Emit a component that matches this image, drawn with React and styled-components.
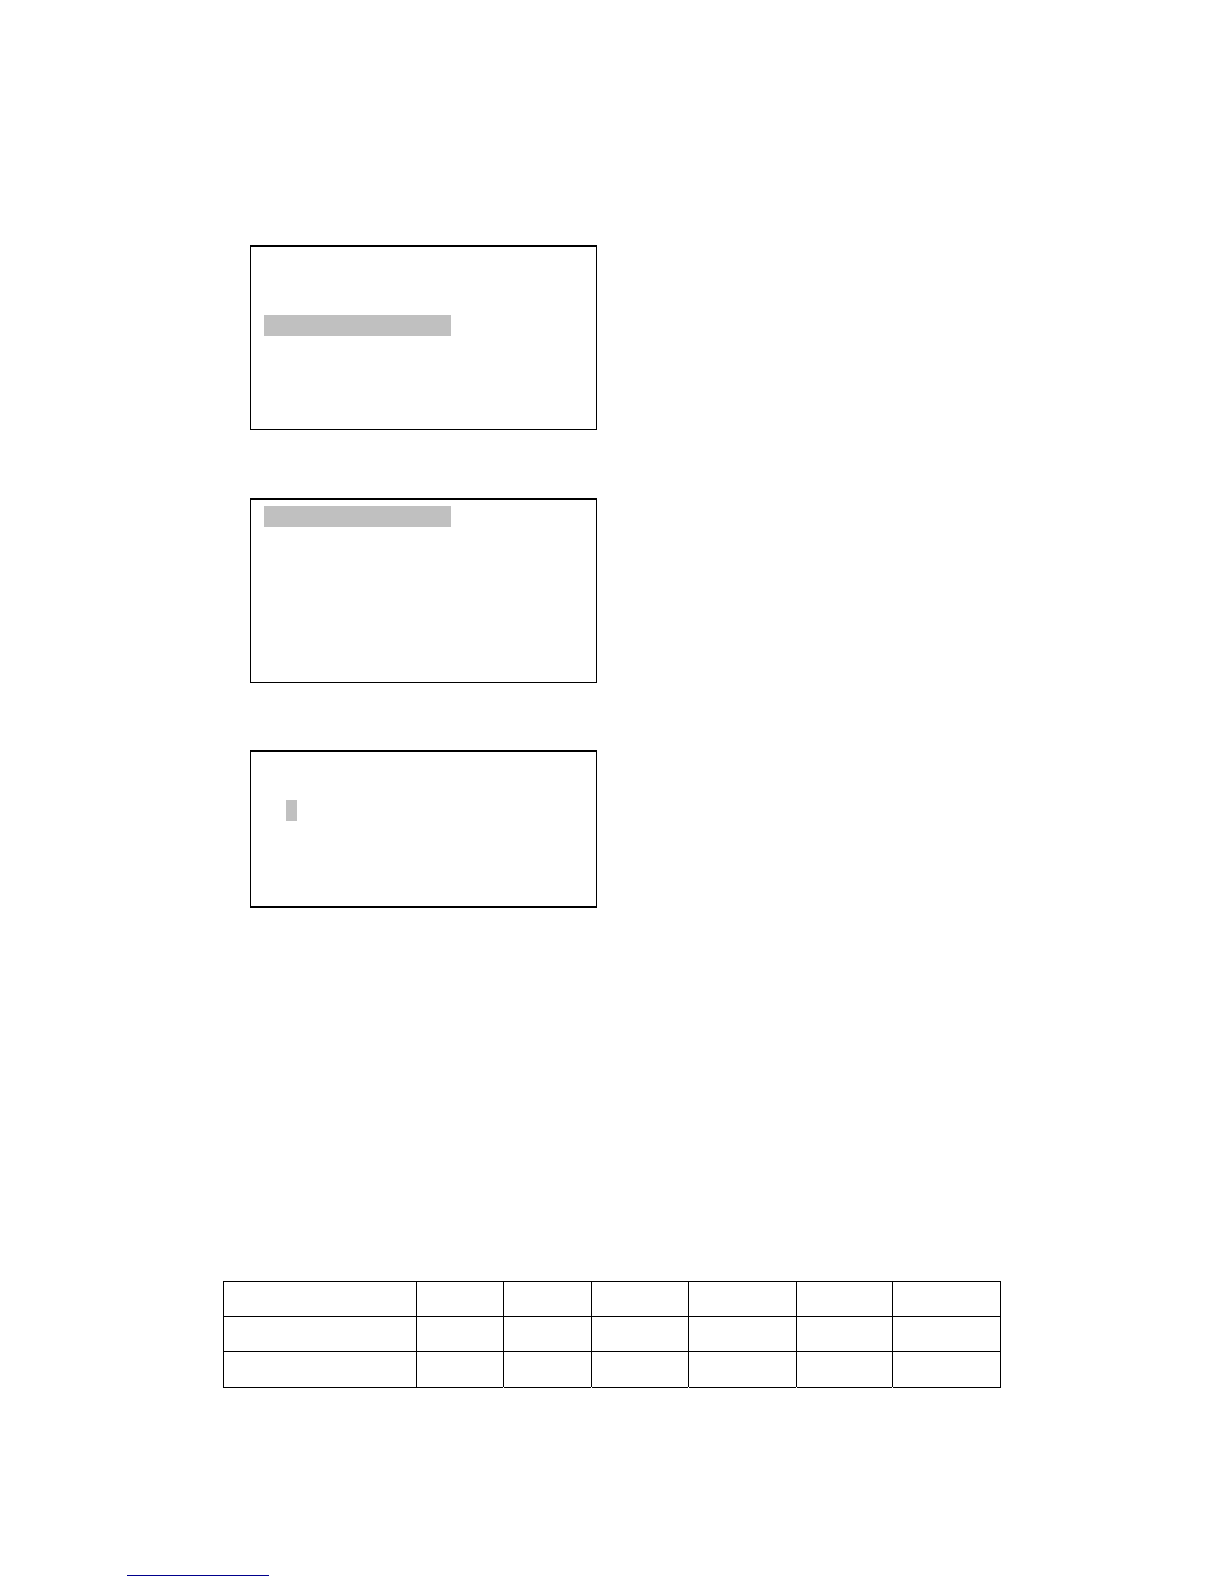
import React from 'react';
import styled, { createGlobalStyle } from 'styled-components';

const GlobalStyle = createGlobalStyle`
  * {
    box-sizing: border-box;
  }
  body {
    margin: 0;
    background: #fff;
    font-family: "Liberation Sans", Arial, sans-serif;
  }
`

//Styled
const Page = styled.div`
  display: flex;
  flex-direction: column;
  padding-bottom: 8px;
`

const Content = styled.main`
  display: flex;
  flex-direction: column;
  padding: 245px 223px 0;
`

const Screens = styled.section`
  display: flex;
  flex-direction: column;
  padding-left: 27px;
`

const Screen = styled.div`
  max-width: 347px;
  min-height: ${props => props.$height}px;
  margin-bottom: ${props => props.$gap}px;
  padding: ${props => props.$top}px 13px 0;
  border: 1px solid #000;
  border-top-width: 2px;
  border-bottom-width: ${props => props.$bottomLine || 1}px;
`

const Highlight = styled.div`
  width: 187px;
  max-width: 100%;
  height: 21px;
  background: #c0c0c0;
`

const Cursor = styled(Highlight)`
  width: 11px;
  margin-left: 22px;
`

const Table = styled.table`
  width: 100%;
  table-layout: fixed;
  border-collapse: separate;
  border-spacing: 0;
  border-right: 1px solid #000;
`

const Cell = styled.td`
  position: relative;
  height: 35px;
  padding: 0;
  border-top: 1px solid #000;
  border-left: 1px solid #000;

  tr:last-child > & {
    height: 37px;
    border-bottom: 1px solid #000;
  }

  /* small break in the bottom rule under each inner column line */
  tr:last-child > &:nth-child(n + 3)::before {
    content: '';
    position: absolute;
    left: -1px;
    bottom: -1px;
    width: 1px;
    height: 1px;
    background: #fff;
  }
`

const Footer = styled.footer`
  display: flex;
  padding: 172px 127px 0;
`

const FooterLink = styled.a`
  width: 142px;
  height: 16px;
  border-bottom: 1px solid #00008c;
`

const columns = [193, 87, 88, 97, 108, 96, 108];
const rows = [0, 1, 2];

const App = () => {
  return (
    <Page>
      <GlobalStyle />
      <Content>
        <Screens>
          <Screen $height={185} $top={68} $gap={68}>
            <Highlight />
          </Screen>
          <Screen $height={185} $top={6} $gap={67}>
            <Highlight />
          </Screen>
          <Screen $height={158} $top={48} $gap={373} $bottomLine={2}>
            <Cursor />
          </Screen>
        </Screens>
        <Table>
          <colgroup>
            {columns.map((width, i) => <col key={i} width={width} />)}
          </colgroup>
          <tbody>
            {rows.map(row => (
              <tr key={row}>
                {columns.map((width, i) => <Cell key={i} />)}
              </tr>
            ))}
          </tbody>
        </Table>
      </Content>
      <Footer>
        <FooterLink href="#" />
      </Footer>
    </Page>
  );
};

export default App;
